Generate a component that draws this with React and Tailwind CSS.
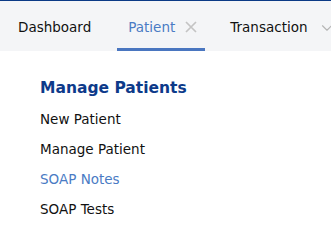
import { ChevronDown } from 'lucide-react';

const links = [
  { label: 'New Patient' },
  { label: 'Manage Patient' },
  { label: 'SOAP Notes', active: true },
  { label: 'SOAP Tests' },
];

function CloseIcon() {
  return (
    <svg width="12" height="12" viewBox="0 0 12 12" className="text-[#c4c4c4] mt-[-1px]">
      <path d="M1 1 L11 11 M11 1 L1 11" stroke="currentColor" strokeWidth="1.7" fill="none" />
    </svg>
  );
}

export default function App() {
  return (
    <div className="w-[331px] h-[245px] overflow-hidden bg-white font-['DejaVu_Sans',sans-serif]">
      {/* Tab bar */}
      <div className="h-[51px] bg-[#f4f5f7] border-t border-[#0b3a86] flex items-stretch whitespace-nowrap text-[13.5px]">
        <div className="flex items-center shrink-0 pt-[3px] pl-[18px] pr-[19px] text-[#111]">
          Dashboard
        </div>
        <div className="relative flex items-center shrink-0 pt-[3px] ml-[7px] pl-[11px] pr-[8px] gap-[10px] text-[#4a7bc4]">
          <span>Patient</span>
          <CloseIcon />
          <span className="absolute left-0 right-0 bottom-0 h-[3px] bg-[#4a76c0]" />
        </div>
        <div className="flex items-center shrink-0 pt-[3px] pl-[25px] gap-[10px] text-[#111]">
          <span>Transaction</span>
          <ChevronDown size={18} strokeWidth={1.5} className="text-[#b5b5b5]" />
        </div>
      </div>

      {/* Menu */}
      <div className="pl-[40px] pt-[27px]">
        <h2 className="text-[15.5px] font-bold text-[#0d3a8a] leading-[20px]">Manage Patients</h2>
        <ul className="mt-[6px] flex flex-col">
          {links.map((link) => (
            <li
              key={link.label}
              className={`text-[13.5px] leading-[30px] ${
                link.active ? 'text-[#4a7bc4]' : 'text-[#111]'
              }`}
            >
              {link.label}
            </li>
          ))}
        </ul>
      </div>
    </div>
  );
}
